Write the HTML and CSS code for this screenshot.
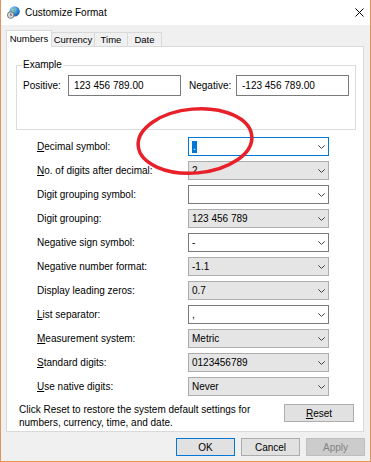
FILE: index.html
```html
<!DOCTYPE html>
<html lang="en">
<head>
  <meta charset="UTF-8">
  <title>Customize Format</title>
  <link rel="stylesheet" href="styles.css">
</head>
<body>
<div class="window">
  <div class="titlebar">
    <svg class="app-icon" viewBox="0 0 12 12">
      <defs>
        <radialGradient id="globe" cx="0.35" cy="0.3" r="0.8">
          <stop offset="0" stop-color="#9fd4ff"/>
          <stop offset="0.6" stop-color="#2f86d6"/>
          <stop offset="1" stop-color="#1a4f9a"/>
        </radialGradient>
      </defs>
      <circle cx="7" cy="5" r="4.8" fill="url(#globe)"/>
      <path d="M5 2.2c1 .3 1.8 1 1.6 2-.3.8-1.4.6-1.7 1.5-.2.6.4 1.2.1 1.8" stroke="#6fbf5a" stroke-width="1.2" fill="none"/>
      <circle cx="3.4" cy="8.4" r="3" fill="#d8d8d8" stroke="#6d6d6d" stroke-width="0.8"/>
      <path d="M3.4 6.8v1.7h1.2" stroke="#333" stroke-width="0.7" fill="none"/>
    </svg>
    <span class="title">Customize Format</span>
    <svg class="close" viewBox="0 0 9 9">
      <path d="M0.5 0.5l8 8M8.5 0.5l-8 8" stroke="#000" stroke-width="1"/>
    </svg>
  </div>

  <div class="client">
    <div class="tabs">
      <div class="tab active">Numbers</div>
      <div class="tab">Currency</div>
      <div class="tab">Time</div>
      <div class="tab">Date</div>
    </div>

    <div class="panel">
      <fieldset class="group">
        <legend>Example</legend>
        <div class="example-row">
          <span class="ex-label pos">Positive:</span>
          <div class="textbox">123 456 789.00</div>
          <span class="ex-label neg">Negative:</span>
          <div class="textbox">-123 456 789.00</div>
        </div>
      </fieldset>

      <div class="settings">
        <div class="label"><u>D</u>ecimal symbol:</div>
        <div class="combo focus"><span class="value"><span class="selected">.</span></span><svg class="chev" viewBox="0 0 7 4"><path d="M0.3 0.3L3.5 3.5L6.7 0.3" fill="none" stroke="#444"/></svg></div>

        <div class="label"><u>N</u>o. of digits after decimal:</div>
        <div class="combo ro"><span class="value">2</span><svg class="chev" viewBox="0 0 7 4"><path d="M0.3 0.3L3.5 3.5L6.7 0.3" fill="none" stroke="#444"/></svg></div>

        <div class="label">Digit grouping symbol:</div>
        <div class="combo"><span class="value"></span><svg class="chev" viewBox="0 0 7 4"><path d="M0.3 0.3L3.5 3.5L6.7 0.3" fill="none" stroke="#444"/></svg></div>

        <div class="label">Digit grouping:</div>
        <div class="combo ro"><span class="value">123 456 789</span><svg class="chev" viewBox="0 0 7 4"><path d="M0.3 0.3L3.5 3.5L6.7 0.3" fill="none" stroke="#444"/></svg></div>

        <div class="label">Negative sign symbol:</div>
        <div class="combo"><span class="value">-</span><svg class="chev" viewBox="0 0 7 4"><path d="M0.3 0.3L3.5 3.5L6.7 0.3" fill="none" stroke="#444"/></svg></div>

        <div class="label">Negative number format:</div>
        <div class="combo ro"><span class="value">-1.1</span><svg class="chev" viewBox="0 0 7 4"><path d="M0.3 0.3L3.5 3.5L6.7 0.3" fill="none" stroke="#444"/></svg></div>

        <div class="label">Display leading zeros:</div>
        <div class="combo ro"><span class="value">0.7</span><svg class="chev" viewBox="0 0 7 4"><path d="M0.3 0.3L3.5 3.5L6.7 0.3" fill="none" stroke="#444"/></svg></div>

        <div class="label"><u>L</u>ist separator:</div>
        <div class="combo"><span class="value">,</span><svg class="chev" viewBox="0 0 7 4"><path d="M0.3 0.3L3.5 3.5L6.7 0.3" fill="none" stroke="#444"/></svg></div>

        <div class="label"><u>M</u>easurement system:</div>
        <div class="combo ro"><span class="value">Metric</span><svg class="chev" viewBox="0 0 7 4"><path d="M0.3 0.3L3.5 3.5L6.7 0.3" fill="none" stroke="#444"/></svg></div>

        <div class="label"><u>S</u>tandard digits:</div>
        <div class="combo ro"><span class="value">0123456789</span><svg class="chev" viewBox="0 0 7 4"><path d="M0.3 0.3L3.5 3.5L6.7 0.3" fill="none" stroke="#444"/></svg></div>

        <div class="label"><u>U</u>se native digits:</div>
        <div class="combo ro"><span class="value">Never</span><svg class="chev" viewBox="0 0 7 4"><path d="M0.3 0.3L3.5 3.5L6.7 0.3" fill="none" stroke="#444"/></svg></div>
      </div>

      <div class="reset-row">
        <p class="hint">Click Reset to restore the system default settings for<br>numbers, currency, time, and date.</p>
        <button class="btn reset"><u>R</u>eset</button>
      </div>
    </div>

    <div class="actions">
      <button class="btn default">OK</button>
      <button class="btn">Cancel</button>
      <button class="btn disabled">Apply</button>
    </div>
  </div>

  <svg class="annotation" viewBox="0 0 371 462">
    <ellipse cx="195" cy="141" rx="57" ry="32" transform="rotate(-5 195 141)" fill="none" stroke="#e8202a" stroke-width="3.5"/>
  </svg>
</div>
</body>
</html>
```

FILE: styles.css
```css
* { box-sizing: border-box; }
body { margin: 0; font-family: "Liberation Sans", Arial, sans-serif; font-size: 10px; color: #000; }

.window { position: relative; width: 371px; height: 462px; background: #fff; border: 1px solid #e4935b; border-top: 0; }

.titlebar { height: 25px; display: flex; align-items: center; padding: 0 6px; }
.app-icon { width: 13px; height: 13px; margin-right: 5px; }
.title { flex: 1; font-size: 10px; }
.close { width: 9px; height: 9px; margin-top: -1px; }

.client { height: 436px; background: #f0f0f0; padding: 5px 5px 0 5px; }

.tabs { position: relative; z-index: 1; display: flex; align-items: flex-end; height: 16px; }
.tab { height: 14px; line-height: 13px; font-size: 9.5px; text-align: center; border: 1px solid #d9d9d9; border-left: 0; border-bottom: 0; background: #f0f0f0; }
.tab.active { height: 17px; margin-bottom: -1px; line-height: 15px; background: #fff; border-left: 1px solid #d9d9d9; width: 46px; }
.tab:nth-child(2) { width: 43px; }
.tab:nth-child(3) { width: 33px; }
.tab:nth-child(4) { width: 34px; }

.panel { width: 358px; height: 386px; background: #fff; border: 1px solid #d9d9d9; }

.group { margin: 11px 7px 0 9px; padding: 3px 6px 33px; border: 1px solid #dcdcdc; min-width: 0; }
.group legend { padding: 0 1px; margin-left: -1px; line-height: 14px; }
.example-row { display: flex; align-items: center; }
.ex-label.pos { width: 45px; }
.ex-label.neg { width: 47px; margin-left: 8px; }
.textbox { width: 113px; height: 21px; border: 1px solid #7a7a7a; padding: 3px 5px 0; line-height: 13px; white-space: nowrap; }

.settings { display: grid; grid-template-columns: 151px 141px; row-gap: 5px; align-items: center; margin: 7px 0 0 30px; }
.combo { height: 19px; display: flex; align-items: center; justify-content: space-between; padding: 0 3px 0 3px; background: #fff; border: 1px solid #7a7a7a; }
.combo.ro { background: #e5e5e5; border-color: #acacac; }
.combo.focus { border-color: #0078d7; }
.combo .value { white-space: nowrap; }
.selected { display: inline-block; background: #0078d7; color: #fff; line-height: 12px; padding: 0 1px; }
.chev { width: 7px; height: 4px; }

.reset-row { display: flex; justify-content: space-between; align-items: flex-start; margin: 8px 9px 0 12px; }
.hint { margin: -1px 0 0; line-height: 13px; }

.btn { height: 18px; padding: 0; font: inherit; color: #000; background: #e1e1e1; border: 1px solid #adadad; }
.btn.reset { width: 70px; }
.btn.default { border-color: #0078d7; }
.btn.disabled { background: #cccccc; border-color: #bfbfbf; color: #838383; }

.actions { display: flex; justify-content: flex-end; gap: 6px; margin-top: 6px; }
.actions .btn { width: 59px; }

.annotation { position: absolute; left: -1px; top: 0; width: 371px; height: 462px; pointer-events: none; }
```
